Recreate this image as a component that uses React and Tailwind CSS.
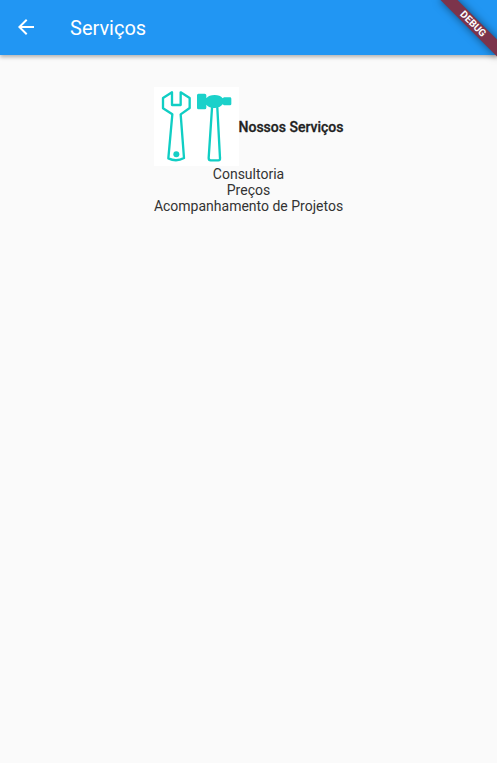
function ToolsPicture() {
  return (
    <svg
      viewBox="15 21 255 237"
      className="h-[79px] w-[85px] shrink-0 bg-white"
      role="img"
      aria-label="Ferramentas"
      fill="none"
      stroke="#10cec4"
      strokeWidth="7"
      strokeLinejoin="round"
      strokeLinecap="round"
    >
      <path d="M69 37V75H95V37L122 54V84L95 103L105 234Q82 247 58 235L70 103L42 85V54Z" />
      <circle cx="82" cy="223" r="9" fill="#14cfc6" stroke="none" />
      <path d="M189 84L179 234Q179 241 185 241H208Q214 241 213 234L205 84" />
      <path
        d="M148 41H167Q172 41 172 46V55Q180 45 197 45Q213 45 221 55L225 52H243Q247 52 247 56V72Q247 76 243 76H225L221 73Q213 84 197 84Q180 84 172 74V83Q172 88 167 88H148Q144 88 144 83V46Q144 41 148 41Z"
        fill="#1bd1ca"
        stroke="none"
      />
    </svg>
  );
}

function DebugBanner() {
  return (
    <div className="pointer-events-none absolute top-0 right-0 h-20 w-20 overflow-hidden">
      <div className="absolute top-[18px] -right-4 flex h-3 w-20 rotate-45 items-center justify-center bg-[#7c344b] text-[10px] leading-3 font-bold text-white shadow-[0_0_8px_rgba(0,0,0,0.5)]">
        DEBUG
      </div>
    </div>
  );
}

export default function App() {
  return (
    <div className="relative min-h-screen bg-[#fafafa] font-[Roboto,sans-serif] text-[#212121]">
      <header className="flex h-[55px] items-center bg-[#2196f3] px-4 text-white shadow-[0_2px_4px_rgba(0,0,0,0.3)]">
        <button type="button" aria-label="Voltar" className="mr-8 -ml-0.5 pb-0.5">
          <svg viewBox="0 0 24 24" className="h-6 w-6" fill="currentColor">
            <path d="M20 11H7.83l5.59-5.59L12 4l-8 8 8 8 1.41-1.41L7.83 13H20v-2z" />
          </svg>
        </button>
        <h1 className="text-xl leading-6">Serviços</h1>
      </header>
      <main className="flex flex-col items-center px-8 pt-8 text-sm leading-4">
        <div className="flex items-center">
          <ToolsPicture />
          <h2 className="font-medium [-webkit-text-stroke:0.3px_#212121]">Nossos Serviços</h2>
        </div>
        <p className="text-[#333333]">Consultoria</p>
        <p className="text-[#333333]">Preços</p>
        <p className="text-[#333333]">Acompanhamento de Projetos</p>
      </main>
      <DebugBanner />
    </div>
  );
}
